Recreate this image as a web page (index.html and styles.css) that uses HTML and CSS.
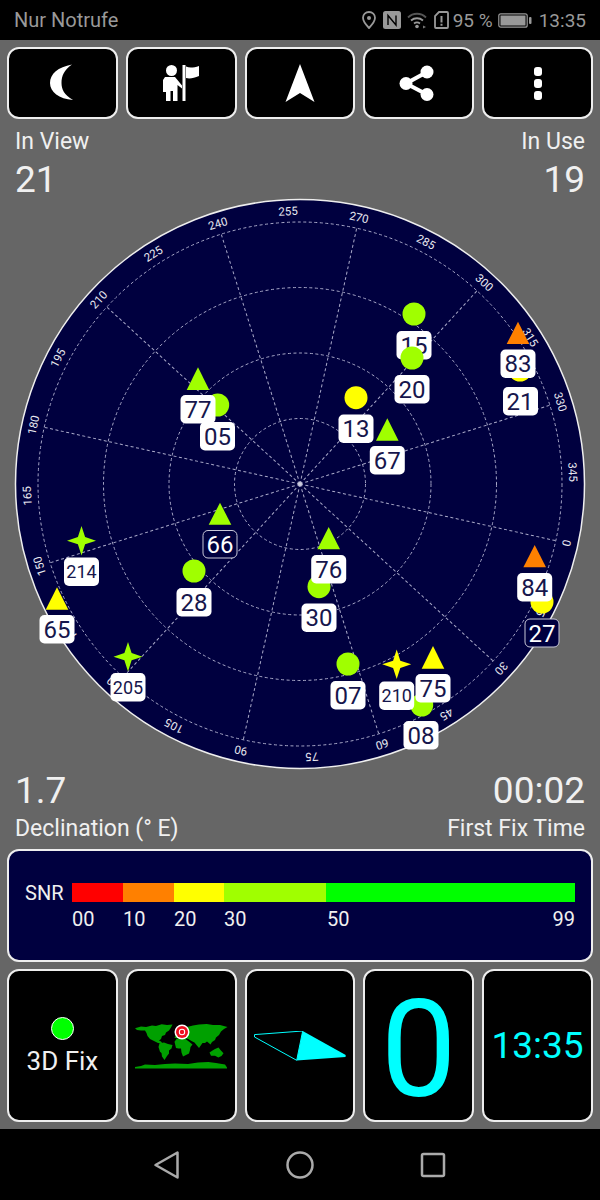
FILE: index.html
```html
<!DOCTYPE html>
<html lang="en">
<head>
    <meta charset="UTF-8">
    <meta name="viewport" content="width=device-width, initial-scale=1.0">
    <title>GPS Status</title>
    <link rel="stylesheet" href="styles.css">
</head>
<body>
    <div class="status-bar">
        <span class="carrier">Nur Notrufe</span>
        <div class="status-right">
            <svg class="status-icon" width="14" height="18" viewBox="0 0 14 18">
                <path d="M7 1C3.6 1 1 3.6 1 6.8 1 10.8 7 17 7 17s6-6.200 6-10.200C13 3.600 10.400 1 7 1z" fill="none" stroke="#999" stroke-width="1.800"/>
                <circle cx="7" cy="7" r="2" fill="#999"/>
            </svg>
            <svg class="status-icon nfc" width="18" height="18" viewBox="0 0 18 18">
                <rect width="18" height="18" rx="2.500" fill="#999"/>
                <path d="M5 14V4.500L13 14V4.500" fill="none" stroke="#000" stroke-width="1.400"/>
            </svg>
            <svg class="status-icon wifi" width="21" height="18" viewBox="0 0 21 18">
                <path d="M1 6.500C6 1.500 14 1.500 19 6.500" fill="none" stroke="#555" stroke-width="1.800"/>
                <path d="M4 9.500C7.500 6.500 12.500 6.500 16 9.500" fill="none" stroke="#999" stroke-width="1.800"/>
                <path d="M7 12.500C9 11 11 11 13 12.500" fill="none" stroke="#999" stroke-width="1.800"/>
                <circle cx="10" cy="15.500" r="1.800" fill="#999"/>
                <path d="M16 14.500l3 1.500-3 1.500z" fill="#777"/>
            </svg>
            <svg class="status-icon sim" width="15" height="18" viewBox="0 0 15 18">
                <path d="M5 1H13a1 1 0 0 1 1 1V16a1 1 0 0 1-1 1H2a1 1 0 0 1-1-1V5z" fill="none" stroke="#999" stroke-width="1.800"/>
                <path d="M6.500 5h2v6.500h-2zM6.500 12.800h2v2h-2z" fill="#999"/>
            </svg>
            <span class="status-text battery-pct">95 %</span>
            <svg class="status-icon battery" width="35" height="18" viewBox="0 0 35 18">
                <rect x="0.800" y="2.800" width="28.400" height="13.400" rx="2" fill="none" stroke="#999" stroke-width="1.200"/>
                <rect x="2.500" y="4.500" width="25" height="10" fill="#999"/>
                <rect x="31" y="6" width="2.500" height="7" rx="1" fill="#999"/>
            </svg>
            <span class="status-text clock">13:35</span>
        </div>
    </div>

    <div class="screen">
        <div class="toolbar">
            <div class="tile">
                <svg width="26" height="38" viewBox="0 0 26 38">
                    <path d="M23 0.500C9 3 1 10 1 19 1 28 10 35 24 36 15 31 12.500 25 12.500 19 12.500 12 15 6 23 0.500z" fill="#fff"/>
                </svg>
            </div>
            <div class="tile">
                <svg width="38" height="38" viewBox="0 0 38 38">
                    <circle cx="9.500" cy="6.500" r="5.500" fill="#fff"/>
                    <path d="M3 13H13L20 21.500V24.500L15.500 21V37H11V27H8.500V37H4V28H1V16z" fill="#fff"/>
                    <rect x="20.500" y="1" width="3" height="36" fill="#fff"/>
                    <path d="M24 2.500C28 4.500 32 3.500 37 2V12C32 14 28 15 24 14z" fill="#fff"/>
                </svg>
            </div>
            <div class="tile">
                <svg width="30" height="38" viewBox="0 0 30 38">
                    <polygon points="15,0 29.500,38 15,29 0.500,38" fill="#fff"/>
                </svg>
            </div>
            <div class="tile">
                <svg class="share" width="36" height="36" viewBox="0 0 36 36">
                    <path d="M28 7L7 18.500 28 29.500" fill="none" stroke="#fff" stroke-width="4"/>
                    <circle cx="28" cy="7" r="6.500" fill="#fff"/>
                    <circle cx="7" cy="18.500" r="6.500" fill="#fff"/>
                    <circle cx="28" cy="29.500" r="6.500" fill="#fff"/>
                </svg>
            </div>
            <div class="tile">
                <div class="dots"><i></i><i></i><i></i></div>
            </div>
        </div>

        <div class="stat-row">
            <div class="stat">
                <div class="stat-label">In View</div>
                <div class="stat-value">21</div>
            </div>
            <div class="stat stat-end">
                <div class="stat-label">In Use</div>
                <div class="stat-value">19</div>
            </div>
        </div>

        <!-- sky plot: rings every 65.5, spokes every 30 deg, the whole dial turned 12.5 deg -->
        <svg class="sky" width="600" height="576" viewBox="0 196 600 576">
            <circle cx="300" cy="484" r="284.500" fill="#00003f" stroke="#eee" stroke-width="1.500"/>
            <g class="grid">
                <circle cx="300" cy="484" r="65.500"/>
                <circle cx="300" cy="484" r="131"/>
                <circle cx="300" cy="484" r="196.500"/>
                <circle cx="300" cy="484" r="262"/>
                <g transform="rotate(12.500 300 484)">
                    <line x1="300" y1="484" x2="562" y2="484"/>
                    <line x1="300" y1="484" x2="526.900" y2="615"/>
                    <line x1="300" y1="484" x2="431" y2="710.900"/>
                    <line x1="300" y1="484" x2="300" y2="746"/>
                    <line x1="300" y1="484" x2="169" y2="710.900"/>
                    <line x1="300" y1="484" x2="73.100" y2="615"/>
                    <line x1="300" y1="484" x2="38" y2="484"/>
                    <line x1="300" y1="484" x2="73.100" y2="353"/>
                    <line x1="300" y1="484" x2="169" y2="257.100"/>
                    <line x1="300" y1="484" x2="300" y2="222"/>
                    <line x1="300" y1="484" x2="431" y2="257.100"/>
                    <line x1="300" y1="484" x2="526.900" y2="353"/>
                </g>
            </g>
            <circle cx="300" cy="484" r="2" fill="#ccd"/>
            <g class="bearing">
                <text transform="rotate(12.500 300 484) rotate(90 573 484)" x="573" y="488">0</text>
                <text transform="rotate(27.500 300 484) rotate(90 573 484)" x="573" y="488">15</text>
                <text transform="rotate(42.500 300 484) rotate(90 573 484)" x="573" y="488">30</text>
                <text transform="rotate(57.500 300 484) rotate(90 573 484)" x="573" y="488">45</text>
                <text transform="rotate(72.500 300 484) rotate(90 573 484)" x="573" y="488">60</text>
                <text transform="rotate(87.500 300 484) rotate(90 573 484)" x="573" y="488">75</text>
                <text transform="rotate(102.500 300 484) rotate(90 573 484)" x="573" y="488">90</text>
                <text transform="rotate(117.500 300 484) rotate(90 573 484)" x="573" y="488">105</text>
                <text transform="rotate(132.500 300 484) rotate(90 573 484)" x="573" y="488">120</text>
                <text transform="rotate(147.500 300 484) rotate(90 573 484)" x="573" y="488">135</text>
                <text transform="rotate(162.500 300 484) rotate(90 573 484)" x="573" y="488">150</text>
                <text transform="rotate(177.500 300 484) rotate(90 573 484)" x="573" y="488">165</text>
                <text transform="rotate(192.500 300 484) rotate(90 573 484)" x="573" y="488">180</text>
                <text transform="rotate(207.500 300 484) rotate(90 573 484)" x="573" y="488">195</text>
                <text transform="rotate(222.500 300 484) rotate(90 573 484)" x="573" y="488">210</text>
                <text transform="rotate(237.500 300 484) rotate(90 573 484)" x="573" y="488">225</text>
                <text transform="rotate(252.500 300 484) rotate(90 573 484)" x="573" y="488">240</text>
                <text transform="rotate(267.500 300 484) rotate(90 573 484)" x="573" y="488">255</text>
                <text transform="rotate(282.500 300 484) rotate(90 573 484)" x="573" y="488">270</text>
                <text transform="rotate(297.500 300 484) rotate(90 573 484)" x="573" y="488">285</text>
                <text transform="rotate(312.500 300 484) rotate(90 573 484)" x="573" y="488">300</text>
                <text transform="rotate(327.500 300 484) rotate(90 573 484)" x="573" y="488">315</text>
                <text transform="rotate(342.500 300 484) rotate(90 573 484)" x="573" y="488">330</text>
                <text transform="rotate(357.500 300 484) rotate(90 573 484)" x="573" y="488">345</text>
            </g>

            <!-- satellites, later ones paint over earlier ones -->
            <circle class="lime" cx="414" cy="314" r="11.500"/>
            <rect class="tag" x="396.500" y="331" width="35" height="28.500" rx="5"/>
            <text class="sat" x="414" y="353.500">15</text>
            <circle class="lime" cx="412" cy="358" r="11.500"/>
            <rect class="tag" x="394.500" y="375" width="35" height="28.500" rx="5"/>
            <text class="sat" x="412" y="397.500">20</text>

            <circle class="yellow" cx="520" cy="370" r="11.500"/>
            <rect class="tag" x="503" y="387" width="35" height="28.500" rx="5"/>
            <text class="sat" x="520" y="409.500">21</text>
            <polygon class="orange" points="518,321.700 529.300,344 506.700,344"/>
            <rect class="tag" x="500.500" y="349.500" width="35" height="28.500" rx="5"/>
            <text class="sat" x="518" y="372">83</text>

            <circle class="yellow" cx="356" cy="397.700" r="11.500"/>
            <rect class="tag" x="338.500" y="414.500" width="35" height="28.500" rx="5"/>
            <text class="sat" x="356" y="437">13</text>
            <polygon class="lime" points="387.300,418.300 398.600,440.700 376,440.700"/>
            <rect class="tag" x="369.800" y="446" width="35" height="28.500" rx="5"/>
            <text class="sat" x="387.300" y="468.500">67</text>

            <circle class="lime" cx="217.700" cy="405" r="11.500"/>
            <polygon class="lime" points="198,367.300 209.300,390 186.700,390"/>
            <rect class="tag" x="180.500" y="395" width="35" height="28.500" rx="5"/>
            <text class="sat" x="198" y="417.500">77</text>
            <rect class="tag" x="200" y="422" width="35" height="28.500" rx="5"/>
            <text class="sat" x="217.500" y="444.500">05</text>

            <polygon class="lime" points="220,502.700 231.300,524.700 208.700,524.700"/>
            <rect class="tag-dark" x="203" y="530.500" width="34" height="27.500" rx="5"/>
            <text class="sat sat-dark" x="220" y="552.500">66</text>

            <polygon class="lime" points="81.500,526 85.100,537.100 96,540.700 85.100,544.300 81.500,555.400 77.900,544.300 67,540.700 77.900,537.100"/>
            <rect class="tag" x="64" y="557.500" width="35" height="28.500" rx="5"/>
            <text class="sat sat-small" x="81.500" y="578">214</text>

            <polygon class="yellow" points="57,587.300 68.300,609.700 45.700,609.700"/>
            <rect class="tag" x="39.500" y="615" width="35" height="28.500" rx="5"/>
            <text class="sat" x="57" y="637.500">65</text>

            <circle class="lime" cx="194" cy="571" r="11.500"/>
            <rect class="tag" x="176.500" y="588" width="35" height="28.500" rx="5"/>
            <text class="sat" x="194" y="610.500">28</text>

            <polygon class="lime" points="128,642 131.600,653.100 142.500,656.700 131.600,660.300 128,671.400 124.400,660.300 113.500,656.700 124.400,653.100"/>
            <rect class="tag" x="110.500" y="673" width="35" height="28.500" rx="5"/>
            <text class="sat sat-small" x="128" y="693.500">205</text>

            <circle class="lime" cx="319" cy="586.700" r="11.500"/>
            <rect class="tag" x="301.500" y="603.500" width="35" height="28.500" rx="5"/>
            <text class="sat" x="319" y="626">30</text>
            <polygon class="lime" points="328.700,527 340,549.300 317.400,549.300"/>
            <rect class="tag" x="311.200" y="555" width="35" height="28.500" rx="5"/>
            <text class="sat" x="328.700" y="577.500">76</text>

            <circle class="lime" cx="348" cy="664" r="11.500"/>
            <rect class="tag" x="330.500" y="681" width="35" height="28.500" rx="5"/>
            <text class="sat" x="348" y="703.500">07</text>

            <circle class="lime" cx="421.700" cy="705" r="11.500"/>
            <rect class="tag" x="403.500" y="721" width="35" height="28.500" rx="5"/>
            <text class="sat" x="421" y="743.500">08</text>
            <polygon class="yellow" points="396.700,649.600 400.300,660.700 411.200,664.300 400.300,667.900 396.700,679 393.100,667.900 382.200,664.300 393.100,660.700"/>
            <rect class="tag" x="379.200" y="681.500" width="35" height="28.500" rx="5"/>
            <text class="sat sat-small" x="396.700" y="702">210</text>
            <polygon class="yellow" points="433,646 444.300,668.700 421.700,668.700"/>
            <rect class="tag" x="415.500" y="674" width="35" height="28.500" rx="5"/>
            <text class="sat" x="433" y="696.500">75</text>

            <circle class="yellow" cx="542" cy="602" r="11.500"/>
            <rect class="tag-dark" x="525" y="619" width="34" height="28" rx="5"/>
            <text class="sat sat-dark" x="542" y="641.500">27</text>
            <polygon class="orange" points="534.700,545 546,567.300 523.400,567.300"/>
            <rect class="tag" x="517.200" y="573" width="35" height="28.500" rx="5"/>
            <text class="sat" x="534.700" y="595.500">84</text>
        </svg>

        <div class="stat-row stat-row-low">
            <div class="stat">
                <div class="stat-value">1.7</div>
                <div class="stat-label">Declination (° E)</div>
            </div>
            <div class="stat stat-end">
                <div class="stat-value">00:02</div>
                <div class="stat-label">First Fix Time</div>
            </div>
        </div>

        <div class="snr-panel">
            <span class="snr-title">SNR</span>
            <div class="snr-scale">
                <div class="snr-bar">
                    <span class="seg seg-red"></span>
                    <span class="seg seg-orange"></span>
                    <span class="seg seg-yellow"></span>
                    <span class="seg seg-lime"></span>
                    <span class="seg seg-green"></span>
                </div>
                <div class="snr-ticks">
                    <span class="tick tick-red">00</span>
                    <span class="tick tick-orange">10</span>
                    <span class="tick tick-yellow">20</span>
                    <span class="tick tick-lime">30</span>
                    <span class="tick tick-green">50</span>
                    <span class="tick-last">99</span>
                </div>
            </div>
        </div>

        <div class="bottom-row">
            <div class="tile tile-tall fix">
                <span class="fix-dot"></span>
                <span class="fix-text">3D Fix</span>
            </div>
            <div class="tile tile-tall">
                <svg class="world" width="96" height="50" viewBox="133 1021 96 50">
                    <!-- rough continents, coordinates are the tile's own screen pixels -->
                    <g class="land">
                        <polygon points="135,1028.300 141,1026.500 146,1027 152,1025.500 156,1026 161.700,1024.300 167,1025 172.500,1024.500 171,1027.500 169,1030.500 166,1032.500 165,1035 162,1036 161,1039 159,1040.500 161,1041.500 162.500,1043.500 158,1043 154,1041 150,1039 147.500,1036 146.500,1033 145,1030.500 141,1030.500 137,1030"/>
                        <polygon points="159.500,1043.300 164,1042.500 168,1044 172.500,1045 171.500,1048.500 169,1050.500 169,1053.500 167,1056 164.500,1060 162,1056.500 161.500,1053 160,1051.700 158.500,1047"/>
                        <polygon points="174.500,1041.700 176.500,1039 181,1038.500 185,1038.500 187.500,1040.500 189.500,1042 192.500,1044.500 190.500,1047 190,1050 189,1053.500 186,1055 183,1056.500 181.500,1052.500 181,1048.500 178.500,1048.500 176,1048"/>
                        <polygon points="174.500,1037.700 176.500,1033.500 179.500,1031 182,1029 187,1027 193,1025.500 199,1024.500 206.700,1024 213,1025 220,1025 227.500,1027 224,1029 221,1031.500 219,1035 216,1037.500 215,1040 212,1042 210.500,1044.500 207,1041.500 205,1043 202.500,1043 199,1048 196.500,1045 194.500,1042.500 191.500,1041 188.300,1039 184,1038 180,1039"/>
                        <polygon points="209.500,1052.500 212.500,1050.500 215,1049 218.500,1047.500 220.500,1050 223.500,1053.300 221.500,1056 218.300,1057.500 215,1055.800 211,1055.800"/>
                        <polygon points="135,1067 141,1066 145,1064.500 155,1065 165,1064 175,1063.500 188,1064 198,1062.500 208.300,1062 216,1063 225,1064.500 227,1067.500 227,1068.500 135,1068.500"/>
                    </g>
                    <circle cx="182" cy="1032" r="7.500" fill="#fff"/>
                    <circle cx="182" cy="1032" r="6" fill="#ee1020"/>
                    <circle cx="182" cy="1032" r="3.200" fill="#fff"/>
                    <circle cx="182" cy="1032" r="2.200" fill="#ee1020"/>
                </svg>
            </div>
            <div class="tile tile-tall">
                <svg class="compass" width="94" height="30" viewBox="0 10 94 30">
                    <path d="M1.500 13.600L49.700 10 43.700 39.300 1.500 16z" fill="none" stroke="#00ffff" stroke-width="1"/>
                    <polygon points="49.700,10 92.700,34 92.500,36 43.700,39.500" fill="#00ffff"/>
                </svg>
            </div>
            <div class="tile tile-tall">
                <span class="big-zero">0</span>
            </div>
            <div class="tile tile-tall">
                <span class="tile-clock">13:35</span>
            </div>
        </div>
    </div>

    <div class="nav-bar">
        <svg width="28" height="30" viewBox="0 0 28 30">
            <path d="M2.500 15L24.500 2.500V27.500z" fill="none" stroke="#aaa" stroke-width="2.500" stroke-linejoin="round"/>
        </svg>
        <svg width="28" height="30" viewBox="0 0 28 30">
            <circle cx="14" cy="15" r="12.500" fill="none" stroke="#aaa" stroke-width="2.500"/>
        </svg>
        <svg width="28" height="30" viewBox="0 0 28 30">
            <rect x="3" y="4" width="22" height="22" rx="1.500" fill="none" stroke="#aaa" stroke-width="2.500"/>
        </svg>
    </div>
</body>
</html>
```
FILE: styles.css
```css
body {
    font-family: Roboto, "Liberation Sans", sans-serif;
    background-color: #000;
    color: #f0f0f0;
    margin: 0;
    padding: 0;
    width: 600px;
    height: 1200px;
    overflow: hidden;
}

.status-bar {
    height: 40px;
    background-color: #000;
    color: #999;
    display: flex;
    align-items: center;
    justify-content: space-between;
    padding: 0 14px;
    font-size: 19px;
}
.carrier {
    font-size: 20px;
}
.status-right {
    display: flex;
    align-items: center;
}
.status-icon {
    display: block;
    margin-right: 7px;
}
.status-icon.nfc,
.status-icon.wifi {
    margin-right: 6px;
}
.status-icon.sim {
    margin-right: 4px;
}
.battery-pct {
    margin-right: 5px;
}
.status-icon.battery {
    margin-right: 6px;
}

.screen {
    height: 1089px;
    background-color: #666;
    padding: 7px 7px 0;
    box-sizing: border-box;
}
.toolbar,
.bottom-row {
    display: grid;
    grid-template-columns: repeat(5, 1fr);
    gap: 8px;
}
.tile {
    height: 72px;
    box-sizing: border-box;
    background-color: #000;
    border: 2px solid #eee;
    border-radius: 12px;
    display: flex;
    align-items: center;
    justify-content: center;
}
.tile-tall {
    height: 153px;
}
.share {
    margin-left: -3px;
}
.dots {
    display: flex;
    flex-direction: column;
    gap: 3px;
}
.dots i {
    display: block;
    width: 8px;
    height: 9px;
    border-radius: 3px;
    background-color: #fff;
}

.stat-row {
    display: flex;
    justify-content: space-between;
    padding: 9px 8px 0;
    height: 68px;
}
.stat-end {
    text-align: right;
}
.stat-label {
    font-size: 23px;
    line-height: 28px;
}
.stat-value {
    font-size: 37px;
    line-height: 44px;
}
.stat-label + .stat-value,
.stat-value + .stat-label {
    margin-top: 2px;
}

.sky {
    display: block;
    margin: 0 -7px;
}
.grid circle,
.grid line {
    fill: none;
    stroke: #a8a8c8;
    stroke-width: 1;
    stroke-dasharray: 3 2.500;
}
.bearing text {
    fill: #e8e8f0;
    font-size: 11.500px;
    text-anchor: middle;
}
.lime { fill: #a0ff00; }
.yellow { fill: #ffff00; }
.orange { fill: #ff8000; }
.land { fill: #00a000; }
.tag { fill: #fff; }
.tag-dark {
    fill: #00003f;
    stroke: #c8c8d8;
    stroke-width: 1;
}
.sat {
    fill: #16164c;
    font-size: 24px;
    text-anchor: middle;
}
.sat-small {
    font-size: 18px;
}
.sat-dark {
    fill: #fff;
}

.stat-row-low {
    padding-top: 0;
    height: 80px;
    margin-top: -3px;
}

.snr-panel {
    height: 113px;
    box-sizing: border-box;
    background-color: #00003f;
    border: 2px solid #eee;
    border-radius: 12px;
    display: flex;
    padding: 32px 16px 0 16px;
    font-size: 20px;
}
.snr-title {
    width: 47px;
    line-height: 20px;
}
.snr-scale {
    width: 503px;
}
.snr-bar {
    display: flex;
    height: 19px;
}
.seg {
    display: block;
}
.seg-red { width: 51px; background-color: #ff0000; }
.seg-orange { width: 51px; background-color: #ff8000; }
.seg-yellow { width: 50px; background-color: #ffff00; }
.seg-lime { width: 102px; background-color: #a0ff00; }
.seg-green { flex: 1; background-color: #00ff00; }
.snr-ticks {
    display: flex;
    margin-top: 5px;
    line-height: 24px;
}
.tick-red,
.tick-orange { width: 51px; }
.tick-yellow { width: 50px; }
.tick-lime { width: 103px; }
.tick-green { width: 225px; }
.tick-last {
    flex: 1;
    text-align: right;
}

.bottom-row {
    margin-top: 7px;
}
.fix {
    flex-direction: column;
    justify-content: flex-start;
    padding-top: 46px;
}
.fix-dot {
    width: 23px;
    height: 23px;
    box-sizing: border-box;
    border: 1.5px solid #fff;
    border-radius: 50%;
    background-color: #00ff00;
}
.fix-text {
    font-size: 26px;
    line-height: 28px;
    margin-top: 7px;
}
.world,
.compass {
    display: block;
}
.big-zero {
    font-size: 135px;
    line-height: 1;
    color: #00ffff;
    margin-top: 10px;
}
.tile-clock {
    font-size: 37px;
    color: #00ffff;
}

.nav-bar {
    height: 71px;
    background-color: #000;
    display: flex;
    align-items: center;
    justify-content: center;
    gap: 105px;
}
.nav-bar svg {
    display: block;
}
```
